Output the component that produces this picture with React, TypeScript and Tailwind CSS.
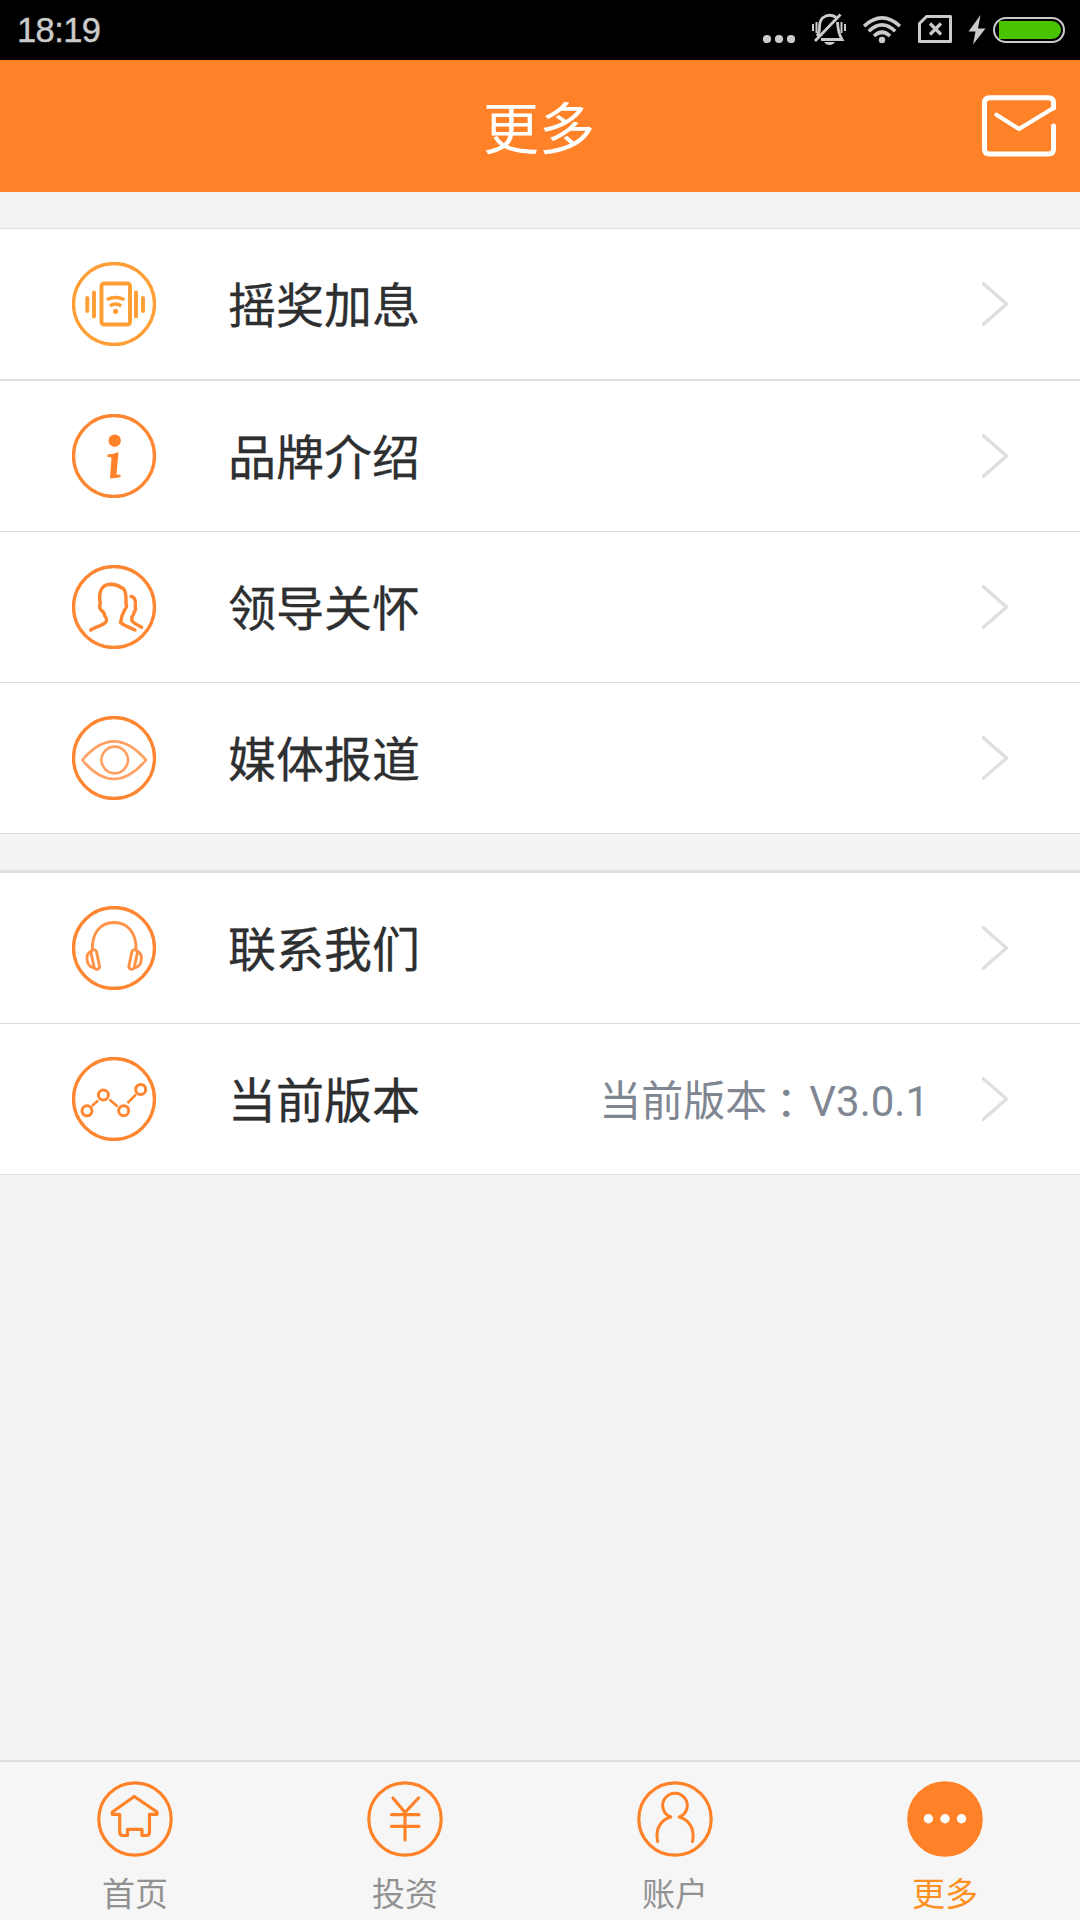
import type { ReactNode } from "react";

const CJK = "font-['Roboto','Noto_Sans_CJK_SC',sans-serif]";

function StatusBar() {
  return (
    <div className="flex h-[60px] items-center bg-black pr-[15px] pl-[17px] text-[#cbcbcb]">
      <span className="flex-1 font-['Liberation_Sans',sans-serif] text-[34.5px] leading-[60px] tracking-[-0.6px] [-webkit-text-stroke:0.4px_#cbcbcb]">18:19</span>
      <svg width="32" height="60" viewBox="763 0 32 60" fill="currentColor">
        <circle cx="767" cy="39" r="4.1" />
        <circle cx="779" cy="39" r="4.1" />
        <circle cx="791" cy="39" r="4.1" />
      </svg>
      <svg className="ml-[17px]" width="34" height="60" viewBox="812 0 34 60" fill="none" stroke="currentColor" strokeWidth="2">
        <path d="M813 24v7M816.5 22v11M841.500 22v11M845 24v7" />
        <path strokeWidth="2.8" d="M836 17.200Q829 13 822.500 18Q819.500 21 819.500 27Q819.500 33 817 36M837.500 22Q838 33 842 39.500H821M840.500 14.500L815 41" />
        <path fill="currentColor" stroke="none" d="M824 42h11q-2 3-5.500 3t-5.500-3z" />
      </svg>
      <svg className="ml-[17px]" width="38" height="60" viewBox="863 0 38 60" fill="none" stroke="currentColor" strokeWidth="3.6">
        <path d="M864 26.200Q882 9.500 900 26.200M868.800 31.300Q882 18.500 895.200 31.300M874 36Q882 28.500 890 36" />
        <circle cx="882" cy="40" r="3.200" fill="currentColor" stroke="none" />
      </svg>
      <svg className="ml-[17px]" width="34" height="60" viewBox="918 0 34 60" fill="none" stroke="currentColor" strokeWidth="3">
        <path strokeLinejoin="round" d="M926.500 16.500H950.500V41.500H919.500V23.500Z" />
        <path strokeWidth="3.200" d="M930 23.500L941 34.500M941 23.500L930 34.500" />
      </svg>
      <svg className="ml-[16px]" width="18" height="60" viewBox="968 0 18 60" fill="currentColor">
        <path d="M980.500 15L968.500 31.500H975.500L973 44.500L985.500 28.500H978Z" />
      </svg>
      <div className="ml-[7px] h-[26px] w-[72px] rounded-full border-2 border-[#cbcbcb] p-[2px]">
        <div className="ml-[2px] h-[18px] w-[62px] rounded-r-full rounded-l-[7px] bg-[#48c400]" />
      </div>
    </div>
  );
}

function Header() {
  return (
    <header className="grid h-[132px] grid-cols-[1fr_auto_1fr] items-center bg-[#ff8228] pr-6">
      <span />
      <h1 className="translate-x-[11px] pt-[7px] text-[56px] leading-[124px] text-white">更多</h1>
      <svg className="justify-self-end" width="74" height="62" viewBox="0 0 74 62" fill="none" stroke="white" strokeWidth="5" strokeLinecap="round" strokeLinejoin="round">
        <path d="M71.500 31V54Q71.500 59 66.500 59H7.500Q2.500 59 2.500 54V8Q2.500 2.700 7.500 2.700H66.500Q71.500 2.700 71.500 8V13" />
        <path strokeWidth="4.200" d="M71.500 13L37 34L14.500 19.700" />
      </svg>
    </header>
  );
}

function RoundIcon({ children, color = "#ff8630" }: { children: ReactNode; color?: string }) {
  return (
    <svg className="shrink-0" width="84" height="84" viewBox="0 0 84 84" fill="none" stroke={color} strokeWidth="3.400" strokeLinecap="round" strokeLinejoin="round">
      <circle cx="42" cy="42" r="40.500" />
      {children}
    </svg>
  );
}

const shakeIcon = (
  <RoundIcon color="#ff9e35">
    <rect x="29.500" y="21.500" width="28.500" height="41" rx="2.500" strokeWidth="3.900" />
    <path strokeWidth="3.900" d="M15.300 36V49M22 30.500V54.500M64 30.500V54.500M71 36V49" />
    <path strokeLinecap="butt" d="M34.700 37.500Q43.500 33.500 52.300 37.500M38 43.800Q43.500 40 49.200 43.800" />
    <circle cx="43.600" cy="49.300" r="2.600" fill="#ff9e35" stroke="none" />
  </RoundIcon>
);

const infoIcon = (
  <RoundIcon>
    <circle cx="42.700" cy="26.700" r="6.200" fill="#ff8228" stroke="none" />
    <path fill="#ff8228" stroke="none" d="M35.500 40.500Q42 40 46.500 38L44.500 60.500Q46 61 48.500 60.700V63Q43 64.500 38 64.200L39.500 44Q39.500 42.800 35.500 43Z" />
  </RoundIcon>
);

const peopleIcon = (
  <RoundIcon>
    <path d="M18.700 65C25 61 34 60 34.500 55.500Q35 53.500 32.800 51Q32.500 47.500 29 45Q26.500 42 28.300 38.500C26.500 29 28 19.300 39 19.300Q45 19.500 50 23Q54.500 24 54 38.500Q55.500 42 52.500 45Q51.500 48 50 50.500Q49.500 54 48.500 57.500Q51 60 63 65" />
    <path d="M59 31.500Q64.500 32 63.300 42Q64.200 45 62.300 46.500Q62 50 60 51.500L59.800 55.500Q62 58.500 69.700 62.300" />
  </RoundIcon>
);

const eyeIcon = (
  <RoundIcon>
    <g stroke="#ffa163" strokeWidth="2.700">
      <path d="M10.300 44Q26 25.300 42 25.300T74 44Q58 63 42 63T10.300 44Z" />
      <circle cx="42.700" cy="44" r="13.300" />
    </g>
  </RoundIcon>
);

const headphoneIcon = (
  <RoundIcon>
    <g strokeWidth="2.900" stroke="#ff9246">
      <path d="M20.300 44C20 27 28 16.500 42 16.500S64.500 27 64 44" />
      <rect x="20.500" y="43.500" width="5.600" height="20" rx="2.800" transform="rotate(-12 23.300 53.500)" />
      <rect x="58.300" y="43.500" width="5.600" height="20" rx="2.800" transform="rotate(12 61.100 53.500)" />
      <path d="M18.500 45.500Q14.500 48 15 53Q15.500 60.500 21.500 61.700M65.900 45.500Q69.900 48 69.400 53Q68.900 60.500 62.900 61.700" />
    </g>
  </RoundIcon>
);

const trendIcon = (
  <RoundIcon>
    <g strokeWidth="3" strokeLinecap="butt">
      <circle cx="15" cy="53.800" r="5" />
      <circle cx="31.400" cy="38" r="5" />
      <circle cx="51.700" cy="53.700" r="5" />
      <circle cx="68.700" cy="32.400" r="5" />
      <path strokeWidth="2.500" d="M20 49L26 43.500M37.500 42.500L45.500 49.500M55.500 46L64 37.500" />
    </g>
  </RoundIcon>
);

function Row({ icon, label, detail }: { icon: ReactNode; label: string; detail?: ReactNode }) {
  return (
    <div className="flex h-[150px] items-center bg-white px-[72px]">
      {icon}
      <span className="ml-[72px] pt-[5px] text-[48px] leading-[72px] text-[#2d2f31] [-webkit-text-stroke:0.3px_#2d2f31]">{label}</span>
      <span className="ml-auto pt-px text-[42px] leading-[64px] text-[#808793]">{detail}</span>
      <svg className="ml-[53px] shrink-0" width="26" height="44" viewBox="0 0 26 44" fill="none" stroke="#dfdfdf" strokeWidth="3.300">
        <path d="M0 0.500L24.500 22L0 43.500" />
      </svg>
    </div>
  );
}

function Tab({ label, active, children }: { label: string; active?: boolean; children: ReactNode }) {
  return (
    <div className="flex flex-1 flex-col items-center pt-[19px]">
      <svg width="76" height="76" viewBox="0 0 76 76" fill="none" stroke="#ff8228" strokeWidth="3.200" strokeLinecap="round" strokeLinejoin="round">
        <circle cx="38" cy="38" r="36.200" fill={active ? "#ff8228" : "none"} />
        {children}
      </svg>
      <span className={`mt-[14px] text-[33px] leading-[48px] ${active ? "text-[#ff9122]" : "text-[#929292]"}`}>{label}</span>
    </div>
  );
}

export default function App() {
  return (
    <div className={`flex h-[1920px] w-[1080px] flex-col overflow-hidden bg-[#f3f3f3] ${CJK}`} lang="zh-CN">
      <StatusBar />
      <Header />
      <section className="mt-9 border-y border-[#dedede]">
        <Row icon={shakeIcon} label="摇奖加息" />
        <div className="h-[2px] bg-[#dedede]" />
        <Row icon={infoIcon} label="品牌介绍" />
        <div className="h-px bg-[#dedede]" />
        <Row icon={peopleIcon} label="领导关怀" />
        <div className="h-px bg-[#dedede]" />
        <Row icon={eyeIcon} label="媒体报道" />
      </section>
      <section className="mt-9 border-t-3 border-b border-[#dfdfdf]">
        <Row icon={headphoneIcon} label="联系我们" />
        <div className="h-px bg-[#dedede]" />
        <Row
          icon={trendIcon}
          label="当前版本"
          detail={
            <>
              当前版本<span className="relative top-[3px] -left-[2px] font-['Noto_Sans_CJK_TC',sans-serif]" lang="zh-TW">：</span>V3.0.1
            </>
          }
        />
      </section>
      <nav className="mt-auto flex h-[160px] border-t-2 border-[#dfdfdf] bg-[#f6f6f6]">
        <Tab label="首页">
          <path d="M37.300 15.500L60 31V33.300H52.500V51Q52.500 54.500 49.500 54.500H45V48.300H30.500V54.500H26Q22.700 54.500 22.700 51V33.300H15.300V31Z" />
        </Tab>
        <Tab label="投资">
          <path d="M26 17L38 31.500L51.500 17M38 31.500V59M24.500 33.700H52M24.500 45.300H52" />
        </Tab>
        <Tab label="账户">
          <path strokeWidth="3" d="M33.800 36A12.300 12.300 0 1 1 42.200 36C53 39 58 49 55.500 60.500M33.800 36C23 39 18 49 20.700 60.500" />
        </Tab>
        <Tab label="更多" active>
          <g fill="white" stroke="none">
            <circle cx="21.400" cy="37.800" r="4.700" />
            <circle cx="38" cy="37.800" r="4.700" />
            <circle cx="54.500" cy="37.800" r="4.700" />
          </g>
        </Tab>
      </nav>
    </div>
  );
}
